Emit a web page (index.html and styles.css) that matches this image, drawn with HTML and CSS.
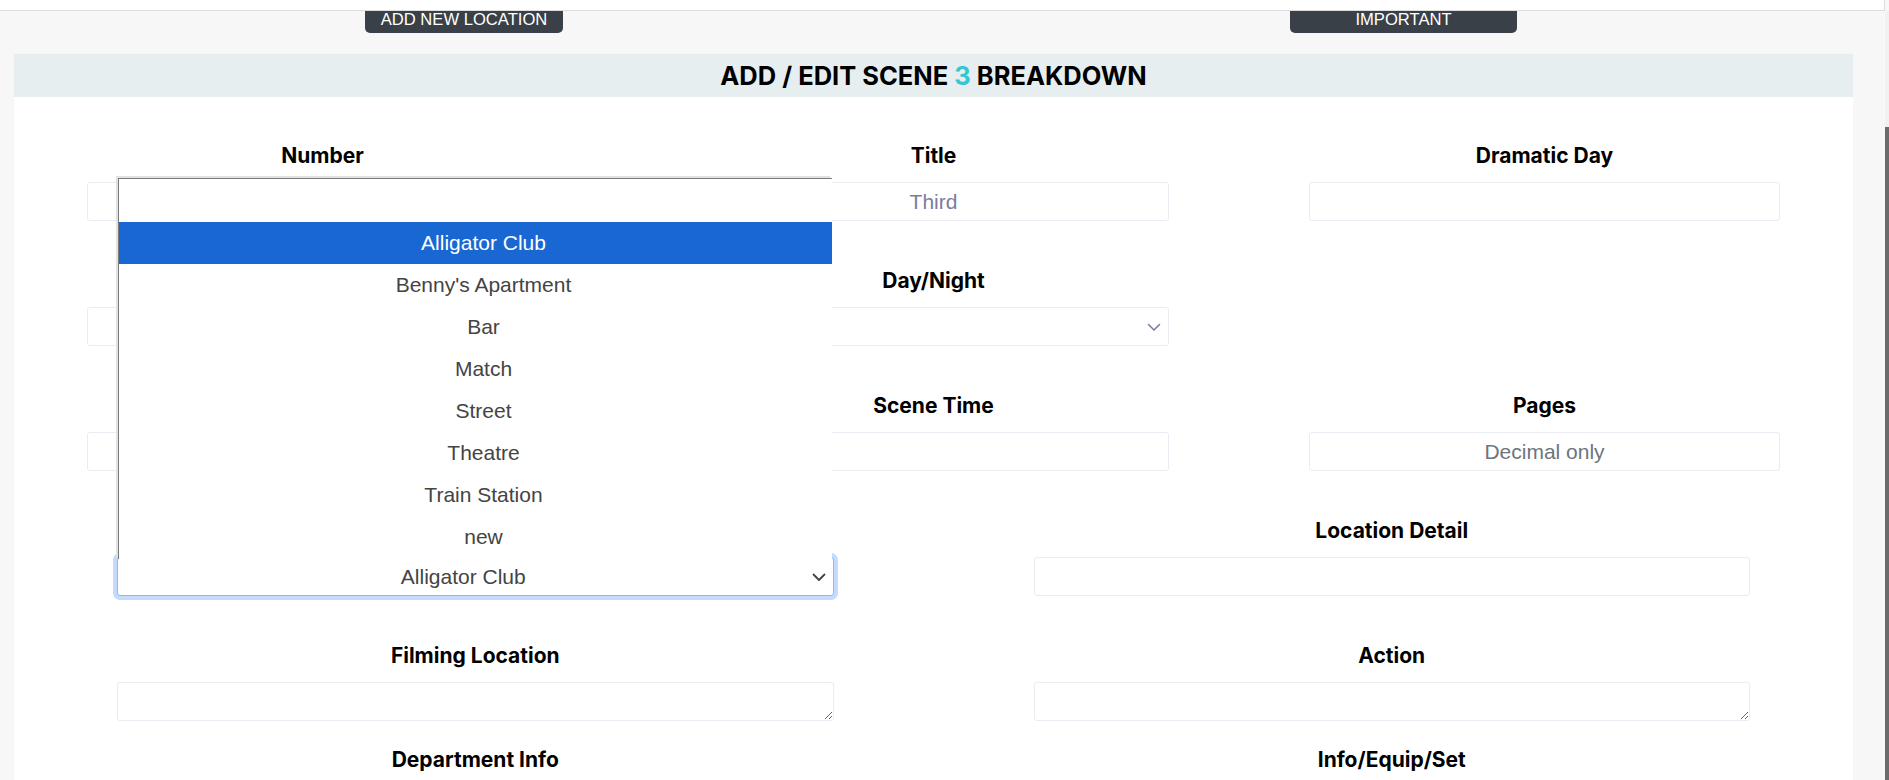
FILE: index.html
```html
<!DOCTYPE html>
<html lang="en">
<head>
<meta charset="utf-8">
<title>Add / Edit Scene Breakdown</title>
<link rel="stylesheet" href="styles.css">
</head>
<body>
<div class="topbar"></div>
<div class="actions">
  <button class="btn-dark btn-add" type="button">ADD NEW LOCATION</button>
  <button class="btn-dark btn-imp" type="button">IMPORTANT</button>
</div>

<div class="card">
  <h2 class="card-title">ADD / EDIT SCENE <span class="accent">3</span> BREAKDOWN</h2>
  <div class="card-body">
    <div class="row row-3">
      <div class="field"><label class="lbl">Number</label><input class="fc" type="text"></div>
      <div class="field"><label class="lbl">Title</label><input class="fc fc-value" type="text" value="Third"></div>
      <div class="field"><label class="lbl">Dramatic Day</label><input class="fc" type="text"></div>
    </div>
    <div class="row row-3">
      <div class="field"><label class="lbl">Int/Ext</label><input class="fc" type="text"></div>
      <div class="field"><label class="lbl">Day/Night</label>
        <div class="select-wrap">
          <select class="fc fc-select"><option></option></select>
          <svg class="chev chev-muted" width="16" height="16" viewBox="0 0 16 16"><path d="M2.5 5.5 8 11l5.5-5.5" fill="none" stroke="currentColor" stroke-width="1.6" stroke-linecap="round" stroke-linejoin="round"/></svg>
        </div>
      </div>
      <div class="field"></div>
    </div>
    <div class="row row-3">
      <div class="field"><label class="lbl">Synopsis</label><input class="fc" type="text"></div>
      <div class="field"><label class="lbl">Scene Time</label><input class="fc" type="text"></div>
      <div class="field"><label class="lbl">Pages</label><input class="fc" type="text" placeholder="Decimal only"></div>
    </div>
    <div class="row row-2">
      <div class="field field-wide"><label class="lbl">Location</label>
        <div class="select-wrap">
          <select class="fc fc-select fc-focus"><option>Alligator Club</option></select>
          <svg class="chev chev-dark" width="16" height="16" viewBox="0 0 16 16"><path d="M2.5 5.5 8 11l5.5-5.5" fill="none" stroke="currentColor" stroke-width="1.8" stroke-linecap="round" stroke-linejoin="round"/></svg>
        </div>
      </div>
      <div class="field field-wide"><label class="lbl">Location Detail</label><input class="fc" type="text"></div>
    </div>
    <div class="row row-2 row-tight">
      <div class="field field-wide"><label class="lbl">Filming Location</label><textarea class="fc fc-area"></textarea></div>
      <div class="field field-wide"><label class="lbl">Action</label><textarea class="fc fc-area"></textarea></div>
    </div>
    <div class="row row-2">
      <div class="field field-wide"><label class="lbl">Department Info</label><textarea class="fc fc-area"></textarea></div>
      <div class="field field-wide"><label class="lbl">Info/Equip/Set</label><textarea class="fc fc-area"></textarea></div>
    </div>
  </div>
</div>

<ul class="select-popup">
  <li class="opt opt-blank"></li>
  <li class="opt opt-active">Alligator Club</li>
  <li class="opt">Benny's Apartment</li>
  <li class="opt">Bar</li>
  <li class="opt">Match</li>
  <li class="opt">Street</li>
  <li class="opt">Theatre</li>
  <li class="opt">Train Station</li>
  <li class="opt">new</li>
</ul>

<div class="scrollbar"><div class="thumb"></div></div>
</body>
</html>
```

FILE: styles.css
```css
html, body {
  margin: 0;
  padding: 0;
  overflow: hidden;
  height: 100%;
}
body {
  background: #f7f7f7;
  font-family: "Liberation Sans", Arial, sans-serif;
  color: #000;
  position: relative;
}
.topbar {
  height: 10px;
  width: 1884px;
  background: #fff;
  border-bottom: 1px solid #dcdcdc;
  border-right: 1px solid #dcdcdc;
}
.actions {
  display: flex;
  gap: 727px;
  padding-left: 365px;
  height: 22px;
}
.btn-dark {
  background: #3a4047;
  color: #fff;
  border: 0;
  border-radius: 0 0 5px 5px;
  font-family: "Liberation Sans", Arial, sans-serif;
  font-size: 16.6px;
  line-height: 18px;
  padding: 0;
  height: 22px;
  display: flex;
  align-items: flex-start;
  justify-content: center;
}
.btn-add { width: 198px; }
.btn-imp { width: 227px; }

.card {
  margin: 21px 0 0 14px;
  width: 1839px;
  background: #fff;
  height: 760px;
}
.card-title {
  margin: 0;
  height: 43px;
  line-height: 43px;
  background: #e7eef0;
  text-align: center;
  font-family: Inter, "Noto Sans", sans-serif;
  font-weight: 700;
  font-size: 25.5px;
  color: #000;
}
.accent { color: #35c6d3; }
.card-body {
  padding: 45px 3px 0;
}
.row {
  display: grid;
  margin-bottom: 46px;
}
.row-tight { margin-bottom: 25px; }
.row-3 { grid-template-columns: repeat(3, 1fr); }
.row-2 { grid-template-columns: repeat(2, 1fr); }
.field {
  display: flex;
  flex-direction: column;
  padding: 0 70px;
}
.field-wide { padding: 0 100px 0 100px; }
.lbl {
  display: block;
  text-align: center;
  font-family: Inter, "Noto Sans", sans-serif;
  font-weight: 700;
  font-size: 21px;
  line-height: 24px;
  padding-top: 2px;
  margin-bottom: 14px;
  color: #000;
}
.fc {
  box-sizing: border-box;
  height: 39px;
  width: 100%;
  border: 1px solid #ebebf3;
  border-radius: 3px;
  background: #fff;
  font-family: "Liberation Sans", Arial, sans-serif;
  font-size: 21px;
  color: #444;
  text-align: center;
  padding: 0 12px;
  margin: 0;
  outline: none;
}
.fc::placeholder { color: #6c757d; }
.fc-value { color: #7b7ba3; }
.select-wrap { position: relative; }
.fc-select {
  appearance: none;
  -webkit-appearance: none;
  text-align-last: center;
  padding: 0 36px 0 12px;
}
.fc-focus {
  border-color: #8ab9fb;
  box-shadow: 0 0 0 4px #c3dcfd;
}
.chev {
  position: absolute;
  top: 12px;
  right: 7px;
}
.chev-muted { color: #7b7ba3; }
.chev-dark { color: #3f4348; }
.fc-area {
  resize: vertical;
  display: block;
}

.select-popup {
  position: absolute;
  top: 178px;
  left: 118px;
  width: 714px;
  height: 381px;
  margin: 0;
  padding: 0 0 0 16px;
  list-style: none;
  background: #fff;
  border-top: 1px solid #7b7b7b;
  border-left: 1px solid #7b7b7b;
  box-shadow: -2px -2px 0 #e2e2e2;
  box-sizing: border-box;
}
.opt {
  height: 42px;
  line-height: 42px;
  text-align: center;
  font-family: "Liberation Sans", Arial, sans-serif;
  font-size: 21px;
  color: #444;
}
.opt-blank { height: 43px; }
.opt-active {
  background: #1967d2;
  color: #fff;
  margin-left: -16px;
  padding-left: 16px;
}

.scrollbar {
  position: absolute;
  top: 11px;
  right: 0;
  width: 4px;
  bottom: 0;
  background: #f1f1f1;
}
.thumb {
  margin-top: 116px;
  height: 700px;
  background: #6b6b6b;
}
```
